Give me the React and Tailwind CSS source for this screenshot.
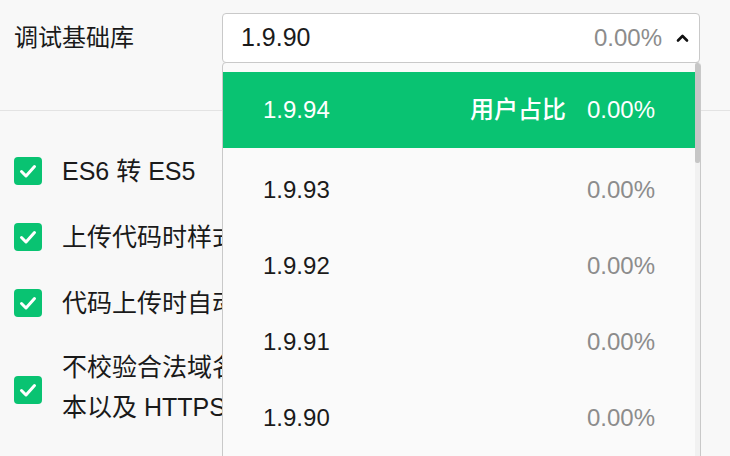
import React from 'react';

const GREEN = 'bg-[#09c372]';

function Check() {
  return (
    <div className={`w-[28px] h-[28px] rounded-[4px] ${GREEN} flex items-center justify-center shrink-0`}>
      <svg width="28" height="28" viewBox="0 0 28 28">
        <polyline points="7.5,14.5 12,19 20.5,9.5" fill="none" stroke="#fff" strokeWidth="3" strokeLinecap="round" strokeLinejoin="round" />
      </svg>
    </div>
  );
}

const versions = ['1.9.93', '1.9.92', '1.9.91', '1.9.90'];

export default function App() {
  return (
    <div
      className="relative w-[730px] h-[456px] overflow-hidden bg-[#f8f8f8] text-[#1a1a1a]"
      style={{ fontFamily: '"Liberation Sans", "Noto Sans CJK SC", sans-serif' }}
    >
      {/* header row */}
      <div className="flex items-center pl-[14px] pt-[13px] pb-[47px] border-b border-[#e3e3e3]">
        <div className="w-[208px] text-[24px] leading-[50px]">调试基础库</div>
        <div className="w-[478px] h-[50px] bg-white border border-[#c9c9c9] rounded-[4px] flex items-center pl-[18px] pr-[10px]">
          <span className="text-[25px]">1.9.90</span>
          <span className="ml-auto text-[24px] text-[#8c8c8c]">0.00%</span>
          <svg className="ml-[14px]" width="13" height="10" viewBox="0 0 13 10">
            <polyline points="2,7.5 6.5,3 11,7.5" fill="none" stroke="#111" strokeWidth="2.6" strokeLinecap="round" strokeLinejoin="round" />
          </svg>
        </div>
      </div>

      {/* options */}
      <div className="pl-[14px] pt-[40px] text-[25px] leading-[40px]">
        <div className="flex items-center gap-[20px] whitespace-nowrap">
          <Check />
          <span>ES6 转 ES5</span>
        </div>
        <div className="flex items-center gap-[20px] mt-[26px] whitespace-nowrap">
          <Check />
          <span>上传代码时样式自动补全</span>
        </div>
        <div className="flex items-center gap-[20px] mt-[26px] whitespace-nowrap">
          <Check />
          <span>代码上传时自动压缩混淆</span>
        </div>
        <div className="flex items-start gap-[20px] mt-[24px] whitespace-nowrap">
          <div className="mt-[29px]">
            <Check />
          </div>
          <span>
            不校验合法域名、web-view（业务域名）、TLS 版
            <br />
            本以及 HTTPS 证书
          </span>
        </div>
      </div>

      {/* dropdown overlay */}
      <div className="absolute left-[222px] top-[62px] w-[479px] h-[410px] bg-[#fafafa] border border-[#c9c9c9] rounded-t-[4px] flex">
        <div className="flex-1 pt-[9px]">
          <div className={`h-[76px] ${GREEN} flex items-center pl-[40px] pr-[40px] text-white text-[24px] font-medium`}>
            <span>1.9.94</span>
            <span className="ml-auto">用户占比</span>
            <span className="ml-[21px]">0.00%</span>
          </div>
          <div className="mt-[4px]">
            {versions.map((v) => (
              <div key={v} className="h-[76px] flex items-center justify-between pl-[40px] pr-[40px] text-[24px]">
                <span>{v}</span>
                <span className="text-[#8c8c8c]">0.00%</span>
              </div>
            ))}
          </div>
        </div>
        <div className="w-[5px] bg-[#f1f1f1]">
          <div className="h-[100px] bg-[#c6c6c6] rounded-[2px]" />
        </div>
      </div>
    </div>
  );
}
